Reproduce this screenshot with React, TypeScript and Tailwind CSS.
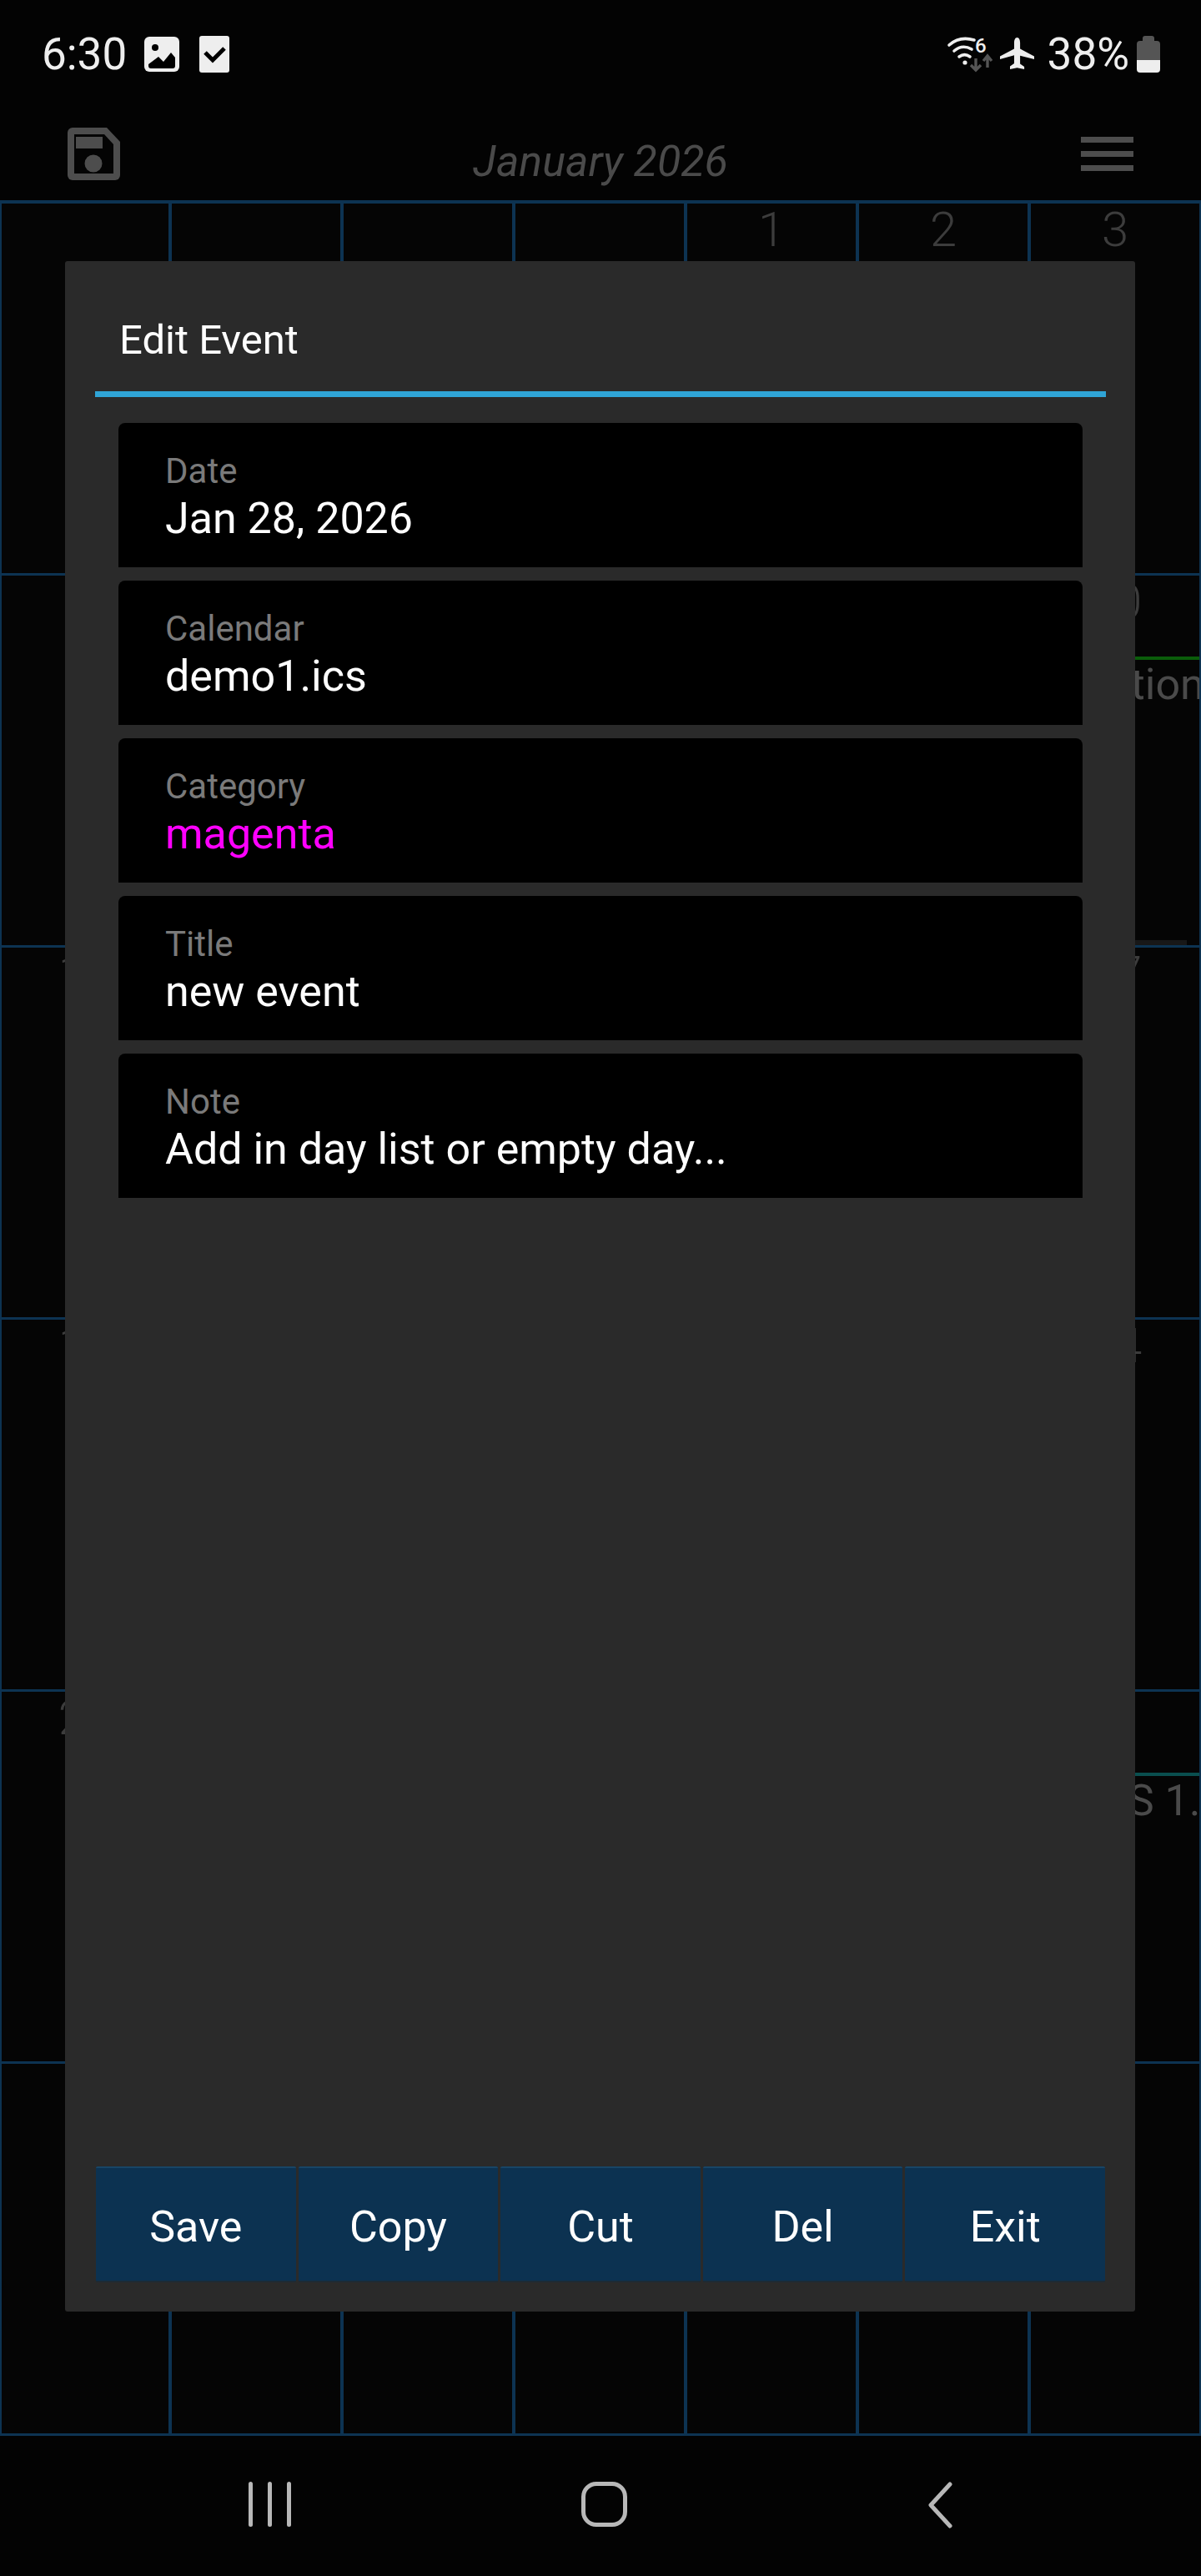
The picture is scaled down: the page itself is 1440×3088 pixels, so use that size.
import type { ReactNode } from 'react';

const WEEKS: { day: string; bar?: string; text?: string; tail?: boolean }[][] = [
  [{ day: '' }, { day: '' }, { day: '' }, { day: '' }, { day: '1' }, { day: '2' }, { day: '3' }],
  [{ day: '4' }, { day: '5' }, { day: '6' }, { day: '7' }, { day: '8' }, { day: '9' }, { day: '10', bar: 'bg-[#0a5c0a]', text: 'Vacation', tail: true }],
  [{ day: '11' }, { day: '12' }, { day: '13' }, { day: '14' }, { day: '15' }, { day: '16' }, { day: '17' }],
  [{ day: '18' }, { day: '19' }, { day: '20' }, { day: '21' }, { day: '22' }, { day: '23' }, { day: '24' }],
  [{ day: '25' }, { day: '26' }, { day: '27' }, { day: '28' }, { day: '29' }, { day: '30' }, { day: '31', bar: 'bg-[#0a4f4f]', text: 'NEWS 1.5' }],
  [{ day: '' }, { day: '' }, { day: '' }, { day: '' }, { day: '' }, { day: '' }, { day: '' }],
];

const FIELDS = [
  { label: 'Date', value: 'Jan 28, 2026', color: 'text-white' },
  { label: 'Calendar', value: 'demo1.ics', color: 'text-white' },
  { label: 'Category', value: 'magenta', color: 'text-[#ff00ff]' },
  { label: 'Title', value: 'new event', color: 'text-white' },
  { label: 'Note', value: 'Add in day list or empty day...', color: 'text-white' },
];

const BUTTONS = ['Save', 'Copy', 'Cut', 'Del', 'Exit'];

function StatusBar() {
  return (
    <div className="flex h-[120px] shrink-0 items-start justify-between pl-[50px] pr-[49px] pt-[43px]">
      <div className="flex items-center">
        <span className="text-[53px] leading-[44px] text-[#eeeeee]">6:30</span>
        <svg className="ml-[21px] h-[42px] w-[42px]" viewBox="0 0 42 42">
          <rect width="42" height="42" rx="6" fill="#eeeeee" />
          <circle cx="13" cy="13" r="4" fill="#000" />
          <path d="M5 33L17 24l6 6 9-11 5 6v10a3 3 0 0 1-3 3H8a3 3 0 0 1-3-3z" fill="#000" />
        </svg>
        <svg className="ml-[24px] h-[44px] w-[36px]" viewBox="0 0 36 44">
          <rect width="36" height="44" rx="3" fill="#eeeeee" />
          <path d="M7 20l9 9 14-14" fill="none" stroke="#000" strokeWidth="5" />
        </svg>
      </div>
      <div className="flex items-center">
        <svg className="h-[44px] w-[54px] overflow-visible" viewBox="0 0 54 44">
          <g fill="none" stroke="#eeeeee" strokeWidth="3.6" strokeLinecap="round">
            <path d="M2 11C11 3 22 2 32 5" />
            <path d="M8 18c7-6 14-6 21-2" />
            <path d="M14 25c4-3 9-3 13 0" />
          </g>
          <circle cx="21" cy="32" r="2.600" fill="#eeeeee" />
          <text x="33" y="20" fontSize="24" fontWeight="500" fill="#eeeeee" fontFamily="Roboto">6</text>
          <path d="M34 27v14M28 35l6 6 6-6" fill="none" stroke="#555555" strokeWidth="3.400" />
          <path d="M48 38V24M43 30l5-6 5 6" fill="none" stroke="#555555" strokeWidth="3.400" />
        </svg>
        <svg className="ml-[9px] h-[40px] w-[41px]" viewBox="0 0 41 40">
          <path d="M20.500 0c2.400 0 3.600 3 3.600 6v7.500L41 22.500v3.600l-16.900-4.300v9.700l5 3.600V38l-8.600-1.800L12 38v-3.400l5-3.600v-9.700L0 26.100v-3.600l17-9V6c0-3 1.200-6 3.500-6z" fill="#eeeeee" />
        </svg>
        <span className="ml-[16px] text-[53px] leading-[44px] text-[#eeeeee]">38%</span>
        <div className="ml-[9px] flex h-[44px] w-[28px] flex-col items-center">
          <div className="h-[6px] w-[14px] rounded-t-[3px] bg-[#555555]" />
          <div className="h-[23px] w-full rounded-t-[4px] bg-[#555555]" />
          <div className="h-[15px] w-full rounded-b-[4px] bg-[#eeeeee]" />
        </div>
      </div>
    </div>
  );
}

function AppHeader() {
  return (
    <div className="flex h-[120px] shrink-0 items-start justify-between pl-[81px] pr-[81px] pt-[33px]">
      <svg className="h-[63px] w-[63px]" viewBox="0 0 63 63">
        <path d="M6 0h41l16 17v40a6 6 0 0 1-6 6H6a6 6 0 0 1-6-6V6a6 6 0 0 1 6-6z" fill="#4d4d4d" />
        <path d="M8 8h36l11 12v35H8z" fill="#040404" />
        <rect x="10" y="11" width="32" height="14" fill="#4d4d4d" />
        <circle cx="31" cy="43" r="10.500" fill="#4d4d4d" />
      </svg>
      <span className="pt-[12px] text-[52px] italic leading-[58px] text-[#4a4a4a]">January 2026</span>
      <div className="flex w-[63px] flex-col gap-[10px] pt-[11px]">
        <div className="h-[7px] bg-[#4d4d4d]" />
        <div className="h-[7px] bg-[#4d4d4d]" />
        <div className="h-[7px] bg-[#4d4d4d]" />
      </div>
    </div>
  );
}

function Calendar() {
  return (
    <div className="grid h-[2680px] w-[1442px] shrink-0 grid-cols-7 grid-rows-6 border-t-4 border-[#0d3352] bg-[#050505]">
      {WEEKS.flat().map((cell, i) => (
        <div key={i} className={`flex min-w-0 flex-col border-r-4 border-b-[3px] border-[#0d3352] ${i % 7 === 0 ? 'border-l-2' : ''} ${cell.text ? 'overflow-hidden' : ''}`}>
          <div className="h-[62px] text-center text-[58px] font-light leading-[62px] text-[#3c3c3c]">{cell.day}</div>
          {cell.bar && <div className={`mt-[35px] h-[4px] w-full shrink-0 ${cell.bar}`} />}
          {cell.text && (
            <div className="whitespace-nowrap pl-[4px] text-[52px] leading-[60px] text-[#4a4a4a]">{cell.text}</div>
          )}
          {cell.tail && <div className="ml-[124px] mt-auto h-[6px] w-[63px] shrink-0 bg-[#181818]" />}
        </div>
      ))}
    </div>
  );
}

function Field({ label, value, color }: { label: string; value: string; color: string }) {
  return (
    <div className="flex h-[173px] flex-col rounded-t-[8px] bg-black pl-[56px] pt-[34px]">
      <span className="text-[42px] leading-[48px] text-[#7a7a7a]">{label}</span>
      <span className={`mt-[3px] text-[52px] leading-[60px] ${color}`}>{value}</span>
    </div>
  );
}

function Dialog({ children }: { children: ReactNode }) {
  return (
    <div className="absolute left-[78px] top-[313px] flex h-[2458px] w-[1283px] flex-col rounded-[3px] bg-[#2a2a2a] pb-[35px] pl-[36px] pr-[35px]">
      {children}
    </div>
  );
}

function NavBar() {
  return (
    <div className="flex h-[168px] shrink-0 items-start bg-[#030303] pt-[55px]">
      <div className="ml-[298px] flex gap-[18px]">
        <div className="h-[54px] w-[5px] rounded-full bg-[#b8b8b8]" />
        <div className="h-[54px] w-[5px] rounded-full bg-[#b8b8b8]" />
        <div className="h-[54px] w-[5px] rounded-full bg-[#b8b8b8]" />
      </div>
      <div className="ml-[348px] h-[54px] w-[55px] rounded-[18px] border-[5px] border-[#b8b8b8]" />
      <svg className="ml-[360px] h-[56px] w-[30px]" viewBox="0 0 30 56">
        <path d="M27 3L4 28l23 25" fill="none" stroke="#b8b8b8" strokeWidth="5" strokeLinecap="round" strokeLinejoin="round" />
      </svg>
    </div>
  );
}

export default function App() {
  return (
    <div className="relative flex h-[3088px] w-[1440px] flex-col overflow-hidden bg-[#030303] font-['Roboto',sans-serif]">
      <StatusBar />
      <AppHeader />
      <Calendar />
      <NavBar />
      <Dialog>
        <div className="h-[163px] shrink-0 border-b-[7px] border-[#2fa4d6] pl-[29px] pt-[67px] text-[49px] leading-[56px] text-white">
          Edit Event
        </div>
        <div className="mt-[31px] flex flex-col gap-[16px] px-[28px]">
          {FIELDS.map(f => <Field key={f.label} {...f} />)}
        </div>
        <div className="mt-auto ml-[1px] mr-[1px] flex h-[139px] gap-[3px]">
          {BUTTONS.map(b => (
            <div key={b} className="flex flex-1 items-center justify-center rounded-[2px] border-t-2 border-b-2 border-t-[#184566] border-b-[#1d2a35] bg-[#0c3251] pt-[6px] text-[52px] text-white">
              {b}
            </div>
          ))}
        </div>
      </Dialog>
    </div>
  );
}
